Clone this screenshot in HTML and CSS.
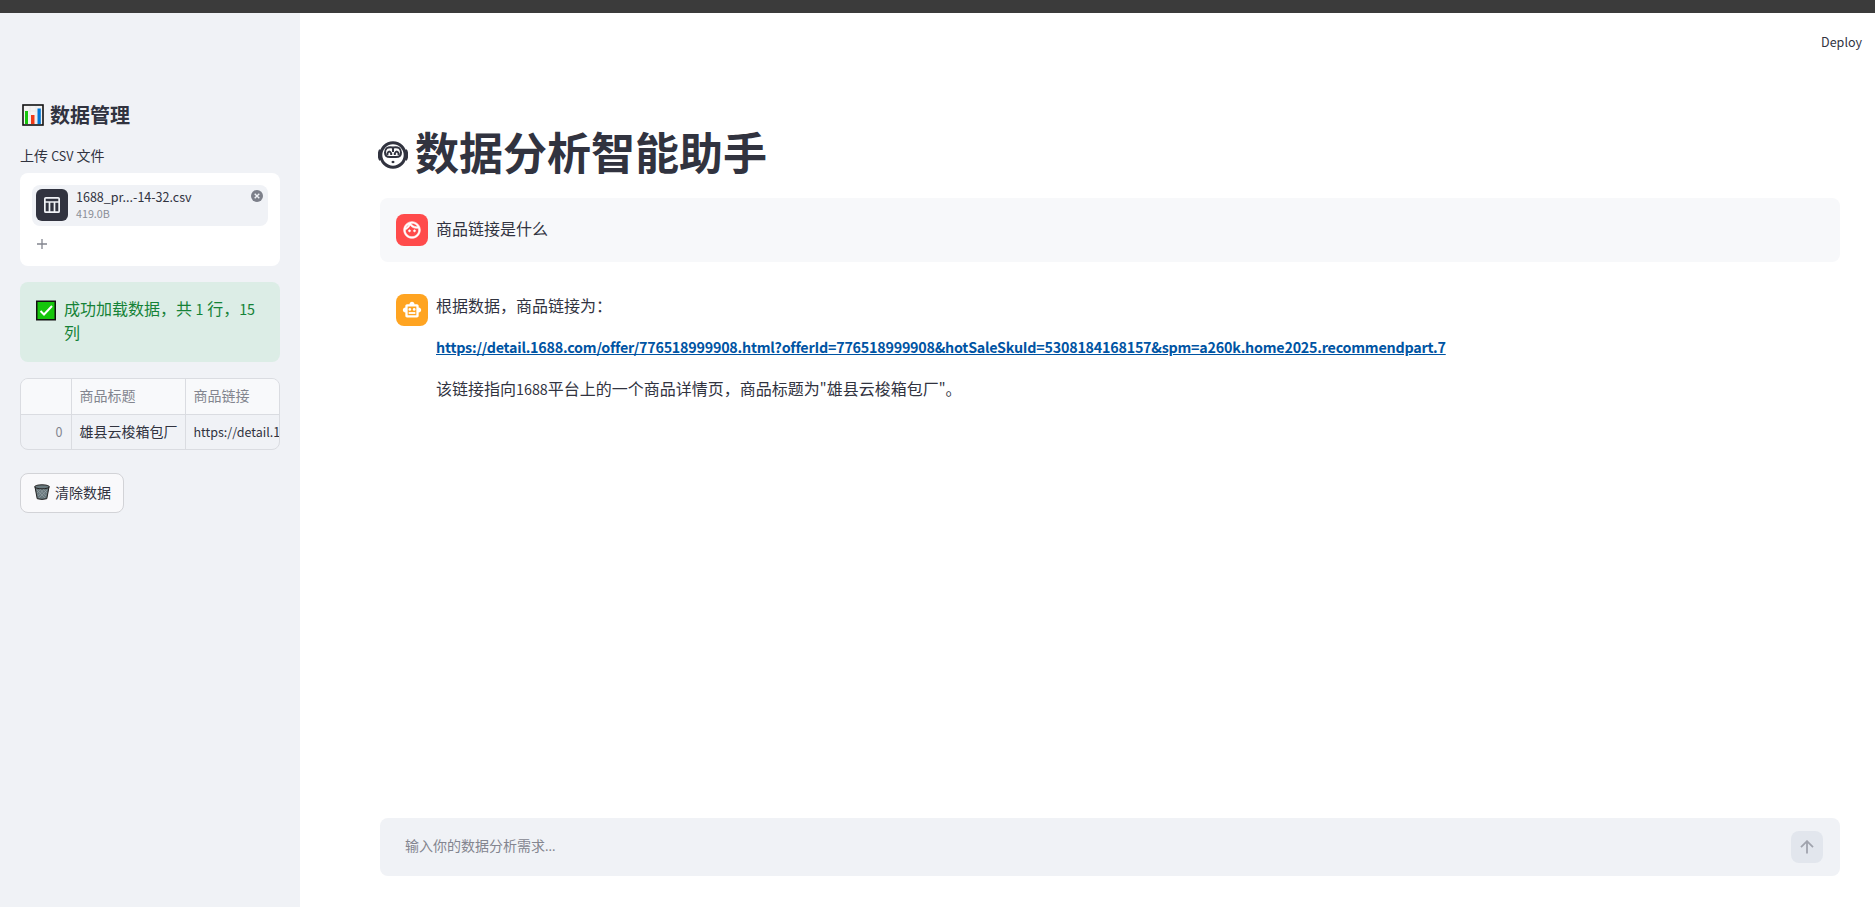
FILE: index.html
```html
<!DOCTYPE html>
<html lang="zh-CN">
<head>
    <meta charset="UTF-8">
    <title>数据分析智能助手</title>
    <link rel="stylesheet" href="styles.css">
</head>
<body>
<div class="topbar"></div>
<div class="app">
    <!--侧边栏-->
    <aside class="sidebar">
        <h2 class="side-title">
            <svg class="icon-chart" viewBox="0 0 22 22">
                <rect x="1" y="1" width="20" height="20" fill="#f3f3f3" stroke="#111" stroke-width="1.600"/>
                <path d="M2 7h18M2 12h18M8 2v18M14 2v18" stroke="#e4e4e4" stroke-width=".6"/>
                <rect x="3" y="7" width="3" height="13" fill="#16c60c"/>
                <rect x="9" y="11" width="3.500" height="9" fill="#f03a17"/>
                <rect x="15.500" y="4.500" width="3.300" height="15.500" fill="#0078d7"/>
            </svg>
            <span>数据管理</span>
        </h2>
        <div class="label">上传 <span class="en">CSV</span> 文件</div>
        <div class="uploader">
            <div class="file">
                <div class="file-icon">
                    <svg viewBox="0 0 16 16" fill="none" stroke="#f0f2f6" stroke-width="1.700">
                        <rect x="0.850" y="0.850" width="14.300" height="14.300" rx="1"/>
                        <path d="M1 5h14M5.500 5v10M10.500 5v10"/>
                    </svg>
                </div>
                <div class="file-info">
                    <div class="file-name">1688_pr...-14-32.csv</div>
                    <div class="file-size">419.0B</div>
                </div>
                <svg class="file-close" viewBox="0 0 12 12">
                    <circle cx="6" cy="6" r="6" fill="#7d808a"/>
                    <path d="M3.700 3.700l4.600 4.600M8.300 3.700l-4.600 4.600" stroke="#f0f2f6" stroke-width="1.400"/>
                </svg>
            </div>
            <svg class="plus" viewBox="0 0 10 10"><path d="M5 0v10M0 5h10" stroke="#83858f" stroke-width="1.300"/></svg>
        </div>
        <div class="alert">
            <svg class="icon-check" viewBox="0 0 20 20">
                <rect x="0.750" y="0.750" width="18.500" height="18.500" fill="#16c60c" stroke="#111" stroke-width="1.500"/>
                <path d="M4.500 10.500l3.500 3.500 8-8.500" fill="none" stroke="#fff" stroke-width="2"/>
            </svg>
            <p>成功加载数据，共 <span class="en">1</span> 行，<span class="en">15</span> 列</p>
        </div>
        <div class="table">
            <div class="cell head num"></div>
            <div class="cell head">商品标题</div>
            <div class="cell head">商品链接</div>
            <div class="cell num"><span class="en">0</span></div>
            <div class="cell">雄县云梭箱包厂</div>
            <div class="cell"><span class="en">https://detail.1688.com</span></div>
        </div>
        <button class="clear">
            <svg class="icon-trash" viewBox="0 0 16 16">
                <path d="M1 3l2.200 11.700q4.800 1.400 9.600 0L15 3z" fill="#69797e" stroke="#222"/>
                <path d="M3 6l8 8M5 4l7 8M8 4l5 5M13 6l-8 8M11 4l-7 8M8 4L3 9" stroke="#9aa5a9" stroke-width=".6"/>
                <ellipse cx="8" cy="2.800" rx="7.400" ry="2" fill="#69797e" stroke="#222"/>
            </svg>
            <span>清除数据</span>
        </button>
    </aside>
    <!--主区域-->
    <main class="main">
        <div class="deploy">Deploy</div>
        <h1 class="title">
            <svg class="icon-monkey" viewBox="0 0 30 28" fill="none" stroke="#31333f">
                <circle cx="15" cy="14" r="12.200" stroke-width="3"/>
                <path d="M2.500 9q-2.500 5 0 10M27.500 9q2.500 5 0 10" stroke-width="3"/>
                <path d="M15 6.500q-8-1.500-8 5 0 4.500 5 4.500h6q5 0 5-4.500 0-6.500-8-5z" stroke-width="2"/>
                <path d="M9.400 14v-1.500q1.800-4 3.800 0V14M16.800 14v-1.500q2-4 3.800 0V14M15 7v4" stroke-width="2"/>
                <path d="M13.700 21h2.600" stroke-width="2.200"/>
            </svg>
            <span>数据分析智能助手</span>
        </h1>
        <div class="message user">
            <div class="avatar red">
                <svg viewBox="0 0 24 24" fill="#fff" stroke="#fff" stroke-width=".7"><path d="M10.250 13c0 .69-.56 1.250-1.250 1.250S7.750 13.690 7.750 13s.56-1.250 1.250-1.250 1.250.56 1.250 1.250zM15 11.750c-.69 0-1.250.56-1.250 1.250s.56 1.250 1.250 1.250 1.250-.56 1.250-1.250-.56-1.250-1.250-1.250zm7 .25c0 5.520-4.480 10-10 10S2 17.520 2 12 6.480 2 12 2s10 4.480 10 10zM10.660 4.120C12.060 6.440 14.600 8 17.500 8c.46 0 .91-.05 1.340-.12C17.440 5.560 14.900 4 12 4c-.46 0-.91.05-1.340.12zM4.420 9.470c1.710-.97 3.030-2.550 3.660-4.440C6.370 6 5.050 7.580 4.420 9.470zM20 12c0-.78-.12-1.530-.33-2.240-.7.150-1.420.24-2.170.24-3.130 0-5.920-1.440-7.760-3.690C8.690 8.870 6.600 10.880 4 11.860c.01.040 0 .09 0 .14 0 4.410 3.590 8 8 8s8-3.590 8-8z"/></svg>
            </div>
            <div class="content"><p>商品链接是什么</p></div>
        </div>
        <div class="message">
            <div class="avatar orange">
                <svg viewBox="0 0 24 24" fill="#fff">
                    <path fill-rule="evenodd" d="M20 9V7c0-1.100-.9-2-2-2h-3c0-1.660-1.340-3-3-3S9 3.340 9 5H6c-1.100 0-2 .9-2 2v2c-1.660 0-3 1.340-3 3s1.340 3 3 3v4c0 1.100.9 2 2 2h12c1.100 0 2-.9 2-2v-4c1.660 0 3-1.340 3-3s-1.340-3-3-3zM6.800 7.800h10.400v10.400H6.800z"/>
                    <circle cx="9.400" cy="11.300" r="1.600"/>
                    <circle cx="14.600" cy="11.300" r="1.600"/>
                    <path d="M8 14.500h8v2.200H8z"/>
                </svg>
            </div>
            <div class="content">
                <p>根据数据，商品链接为：</p>
                <p class="link-row"><a class="link" href="#">https://detail.1688.com/offer/776518999908.html?offerId=776518999908&amp;hotSaleSkuId=5308184168157&amp;spm=a260k.home2025.recommendpart.7</a></p>
                <p>该链接指向<span class="en">1688</span>平台上的一个商品详情页，商品标题为<span class="en">"</span>雄县云梭箱包厂<span class="en">"</span>。</p>
            </div>
        </div>
        <div class="chat-input">
            <span>输入你的数据分析需求<span class="en">...</span></span>
            <div class="send">
                <svg viewBox="0 0 14 14" fill="none" stroke="#a0a3ad" stroke-width="1.800"><path d="M7 13.500V1.500M1 7.200l6-6 6 6"/></svg>
            </div>
        </div>
    </main>
</div>
</body>
</html>
```
FILE: styles.css
```css
*{
    box-sizing: border-box;
    padding: 0;
    margin: 0;
}
body{
    height: 907px;
    overflow: hidden;
    background: #fff;
    color: #31333f;
    font: 16px/24px "Noto Sans CJK SC", sans-serif;
}
svg{
    display: block;
    flex: none;
}
/* 西文字形比中文小一号 */
.en{
    font-size: 0.895em;
    line-height: 1;
}
.topbar{
    height: 13px;
    background: #3b3b3b;
}
.app{
    display: flex;
    height: 894px;
}
.sidebar{
    width: 300px;
    padding: 88px 20px 0;
    background: #f0f2f6;
}
.side-title{
    display: flex;
    gap: 6px;
    align-items: center;
    height: 28px;
    padding-left: 2px;
    font-size: 20px;
}
.icon-chart{
    width: 22px;
    height: 22px;
}
.label{
    margin-top: 14px;
    height: 30px;
    font-size: 14px;
}
.uploader{
    height: 93px;
    padding: 12px;
    background: #fff;
    border-radius: 8px;
}
.file{
    display: flex;
    height: 41px;
    padding: 4px 5px 4px 4px;
    background: #f0f2f6;
    border-radius: 8px;
}
.file-icon{
    display: flex;
    align-items: center;
    justify-content: center;
    width: 32px;
    height: 32px;
    background: #31333f;
    border-radius: 6px;
}
.file-icon svg{
    width: 16px;
    height: 16px;
}
.file-info{
    flex: 1;
    padding-left: 8px;
}
.file-name{
    font-size: 12.530px;
    line-height: 16px;
}
.file-size{
    color: #8b8e97;
    font-size: 10.740px;
    line-height: 17px;
}
.file-close{
    width: 12px;
    height: 12px;
    margin-top: 1px;
}
.plus{
    width: 10px;
    height: 10px;
    margin: 13px 0 0 5px;
}
.alert{
    display: flex;
    gap: 8px;
    height: 80px;
    margin-top: 16px;
    padding: 14px 16px;
    background: #dcede6;
    border-radius: 8px;
    color: #158237;
}
.icon-check{
    width: 20px;
    height: 21px;
    margin-top: 4px;
}
.table{
    display: grid;
    grid-template-columns: 51px 114px 95px;
    grid-template-rows: 36px 35px;
    height: 72px;
    margin-top: 16px;
    border: 1px solid #dadce1;
    border-radius: 8px;
    overflow: hidden;
}
.cell{
    padding: 0 7px 0 7.500px;
    border-right: 1px solid #dadce1;
    font-size: 14px;
    line-height: 33px;
    white-space: nowrap;
    overflow: hidden;
}
.head{
    background: #f8f9fb;
    border-bottom: 1px solid #dadce1;
    color: #83858f;
}
.num{
    padding-right: 8.500px;
    color: #83858f;
    text-align: right;
}
.clear{
    display: flex;
    align-items: center;
    gap: 5px;
    width: 104px;
    height: 40px;
    margin-top: 23px;
    padding: 0 0 3px 13px;
    background: #f9f9fb;
    border: 1px solid #d2d3d7;
    border-radius: 8px;
    color: #31333f;
    font: 14px "Noto Sans CJK SC", sans-serif;
}
.icon-trash{
    width: 16px;
    height: 16px;
    margin-top: 1px;
}
.main{
    display: flex;
    flex: 1;
    flex-direction: column;
    padding: 0 35px 31px 80px;
}
.deploy{
    margin: 17px -22px 0 0;
    height: 24px;
    font-size: 12.530px;
    text-align: right;
}
.title{
    display: flex;
    align-items: center;
    gap: 7px;
    height: 53px;
    margin: 71px 0 20px -2px;
    font-size: 44px;
    line-height: 53px;
}
.icon-monkey{
    width: 30px;
    height: 28px;
    margin-top: 6px;
}
.message{
    display: flex;
    gap: 8px;
    margin-bottom: 16px;
    padding: 16px;
    border-radius: 8px;
}
.user{
    background: #f7f8fa;
}
.avatar{
    display: flex;
    align-items: center;
    justify-content: center;
    width: 32px;
    height: 32px;
    border-radius: 8px;
}
.avatar svg{
    width: 20px;
    height: 20px;
}
.red{
    background: #ff4b4b;
}
.orange{
    background: #ffa421;
}
.content{
    margin-top: -1px;
}
.content p{
    margin-bottom: 17.500px;
}
.content .link-row{
    margin: -1px 0 18.500px;
}
.user p{
    margin: 3px 0 0;
}
.link{
    color: #0054a3;
    font-size: 14.320px;
    font-weight: bold;
    letter-spacing: -0.230px;
    line-height: 1;
}
.chat-input{
    display: flex;
    justify-content: space-between;
    height: 58px;
    margin-top: auto;
    padding: 13px 17px 0 25px;
    background: #f0f2f6;
    border-radius: 8px;
    color: #83858f;
    font-size: 14px;
    line-height: 28px;
}
.send{
    display: flex;
    align-items: center;
    justify-content: center;
    width: 32px;
    height: 32px;
    background: #e2e6ed;
    border-radius: 8px;
}
.send svg{
    width: 14px;
    height: 14px;
}
```
